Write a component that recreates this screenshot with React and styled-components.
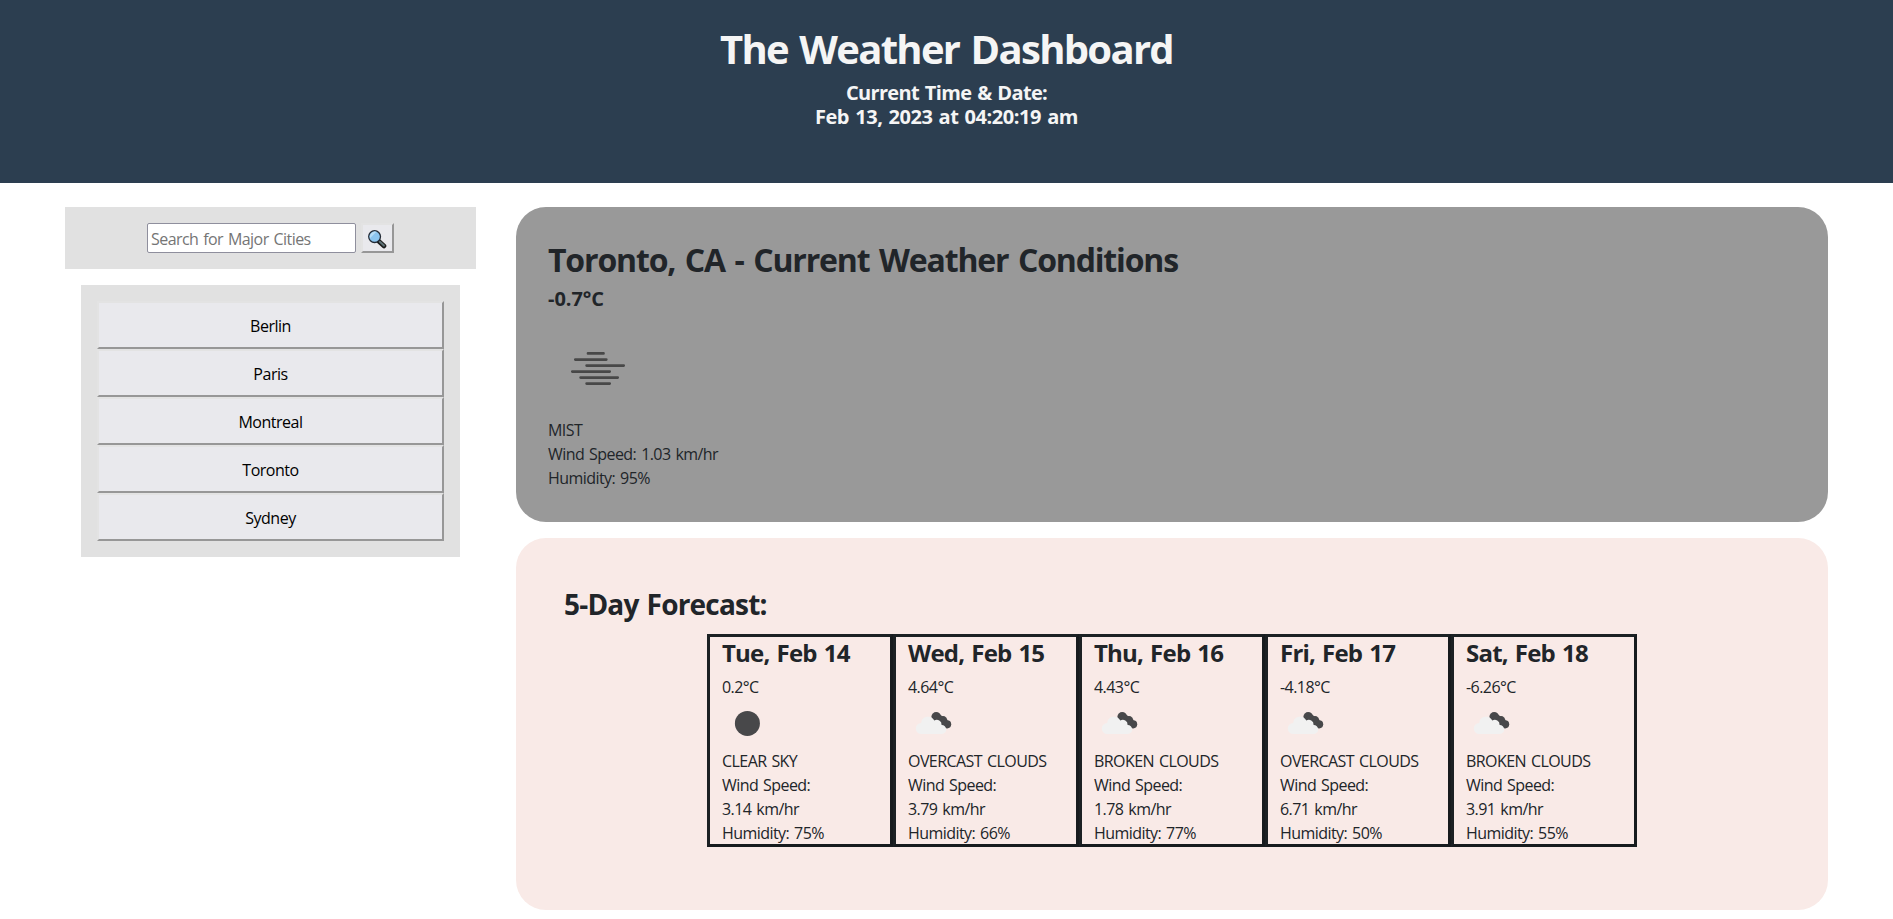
import React from "react";
import styled, { createGlobalStyle } from "styled-components";

const INK = "#212529";

const GlobalStyle = createGlobalStyle`
  *, *::before, *::after { box-sizing: border-box; }
  body {
    margin: 0;
    background: #fff;
    color: ${INK};
    font: 400 16px/24px "Segoe UI", "Open Sans", "Liberation Sans", sans-serif;
    letter-spacing: -0.56px;
    word-spacing: 1.3px;
  }
`;

const Header = styled.header`
  height: 183px;
  padding-top: 25px;
  background: #2c3e50;
  color: #f5f5f5;
  text-align: center;
`;

const Title = styled.h1`
  margin: 0 0 8px;
  font-size: 40px;
  font-weight: 700;
  line-height: 48px;
  letter-spacing: -1.7px;
  word-spacing: 2.6px;
`;

const Clock = styled.div`
  font-size: 20px;
  font-weight: 700;
`;

const ClockLine = styled.div`
  letter-spacing: ${(p) => p.$spacing};
`;

const Page = styled.div`
  display: flex;
  align-items: flex-start;
  gap: 40px;
  padding: 24px 65px 9px;
`;

const Sidebar = styled.aside`
  width: 411px;
  flex: none;
`;

const SearchBar = styled.form`
  display: flex;
  justify-content: center;
  gap: 5px;
  height: 62px;
  padding: 16px;
  background: #e1e1e1;
`;

const SearchInput = styled.input`
  width: 209px;
  height: 30px;
  padding: 3px 3px 1px;
  border: 1px solid #8f8f9d;
  border-radius: 2px;
  background: #fff;
  font: inherit;
  letter-spacing: inherit;
  word-spacing: inherit;
  &::placeholder {
    color: #757575;
    opacity: 1;
  }
`;

const RaisedButton = styled.button`
  border: 2px solid;
  border-color: #e3e3e3 #979797 #979797 #e3e3e3;
  background: #e9e9ed;
  color: #000;
  font: inherit;
  letter-spacing: -0.48px;
`;

const SearchButton = styled(RaisedButton)`
  display: flex;
  align-items: center;
  justify-content: center;
  width: 33px;
  height: 30px;
  padding: 1px 1px 0 0;
`;

const CityList = styled.div`
  display: flex;
  flex-direction: column;
  margin: 16px 16px 0;
  padding: 16px;
  background: #e1e1e1;
`;

const CityButton = styled(RaisedButton)`
  height: 48px;
  padding: 2px 0 0;
`;

const Main = styled.main`
  width: 1312px;
  display: flex;
  flex-direction: column;
  gap: 16px;
`;

const Current = styled.section`
  height: 315px;
  padding: 34px 32px 0;
  border-radius: 30px;
  background: #999;
`;

const CurrentTitle = styled.h2`
  margin: 0 0 8px;
  font-size: 32px;
  font-weight: 700;
  line-height: 38px;
  letter-spacing: -1.16px;
  word-spacing: 2.4px;
`;

const CurrentTemp = styled.div`
  margin-bottom: 7px;
  font-size: 20px;
  font-weight: 700;
  letter-spacing: -0.05px;
`;

const Icon = styled.svg`
  display: block;
  width: ${(p) => p.$size}px;
  height: ${(p) => p.$size}px;
  margin: ${(p) => p.$margin || 0};
`;

const Forecast = styled.section`
  height: 372px;
  padding: 49px 48px 0;
  border-radius: 30px;
  background: #f9eae7;
`;

const ForecastTitle = styled.h3`
  margin: 0 0 13px;
  font-size: 28px;
  font-weight: 700;
  line-height: 34px;
  letter-spacing: -0.8px;
  word-spacing: 1.5px;
`;

const Days = styled.div`
  display: flex;
  justify-content: center;
`;

const Day = styled.article`
  width: 186px;
  height: 213px;
  padding: 1px 12px 0;
  border: 3px solid;
  border-color: #1c2124 #171b1e #171b1e #1c2124;
`;

const DayName = styled.h4`
  margin: 0 0 8px;
  font-size: 24px;
  font-weight: 700;
  line-height: 29px;
  letter-spacing: -0.78px;
  word-spacing: 1.5px;
  white-space: nowrap;
`;

const Line = styled.div`
  white-space: nowrap;
`;

const CITIES = ["Berlin", "Paris", "Montreal", "Toronto", "Sydney"];

const DAYS = [
  { name: "Tue, Feb 14", temp: "0.2°C", icon: "moon", sky: "CLEAR SKY", wind: "3.14", humidity: 75 },
  { name: "Wed, Feb 15", temp: "4.64°C", icon: "clouds", sky: "OVERCAST CLOUDS", wind: "3.79", humidity: 66 },
  { name: "Thu, Feb 16", temp: "4.43°C", icon: "clouds", sky: "BROKEN CLOUDS", wind: "1.78", humidity: 77 },
  { name: "Fri, Feb 17", temp: "-4.18°C", icon: "clouds", sky: "OVERCAST CLOUDS", wind: "6.71", humidity: 50 },
  { name: "Sat, Feb 18", temp: "-6.26°C", icon: "clouds", sky: "BROKEN CLOUDS", wind: "3.91", humidity: 55 },
];

const MistIcon = () => (
  <Icon $size={100} viewBox="0 0 100 100" stroke="#484848" strokeWidth="2.7" strokeLinecap="round">
    <path d="M40 35.4H55.5M27.3 41.6H58.3M38.6 47.6H75.7M24.3 53.6H61.7M32.6 59.6H69.7M38.6 65.6H61.7" />
  </Icon>
);

const MoonIcon = () => (
  <Icon $size={50} $margin="-1px 0 1px" viewBox="0 0 50 50">
    <circle cx="25.4" cy="25.4" r="12.5" fill="#48484a" />
  </Icon>
);

const CloudsIcon = () => (
  <Icon $size={50} $margin="-1px 0 1px" viewBox="0 0 50 50">
    <g fill="#48484a">
      <circle cx="28.2" cy="18.8" r="4.8" />
      <circle cx="35" cy="22.5" r="4.4" />
      <circle cx="39.1" cy="26.3" r="4.1" />
      <path d="M24.5 21L38 30.3L41 24L31 15.5Z" />
    </g>
    <path
      fill="#f1f1f1"
      d="M13.4 36A5.5 5.5 0 0 1 13.2 25A6.9 6.9 0 0 1 26.3 22.6A4.8 4.8 0 0 1 33.6 27A4.5 4.5 0 0 1 33.8 36Z"
    />
  </Icon>
);

const MagnifierIcon = () => (
  <Icon $size={20} viewBox="0 0 20 20">
    <path d="M11.5 12L17 17" stroke="#1c1c1c" strokeWidth="4.6" strokeLinecap="round" />
    <path d="M12.8 12.8L16.9 16.6" stroke="#5f7377" strokeWidth="2" strokeLinecap="round" />
    <circle cx="7.6" cy="7.6" r="5.9" fill="#8cc5ef" stroke="#222a35" strokeWidth="1.3" />
    <path d="M3 9.2L9.4 2.8A5.2 5.2 0 0 0 3 9.2Z" fill="#b8ddf6" />
  </Icon>
);

const ICONS = { moon: MoonIcon, clouds: CloudsIcon };

function DayCard({ day }) {
  const SkyIcon = ICONS[day.icon];
  return (
    <Day>
      <DayName>{day.name}</DayName>
      <Line>{day.temp}</Line>
      <SkyIcon />
      <Line>{day.sky}</Line>
      <Line>Wind Speed:</Line>
      <Line>{day.wind} km/hr</Line>
      <Line>Humidity: {day.humidity}%</Line>
    </Day>
  );
}

export default function App() {
  return (
    <>
      <GlobalStyle />
      <Header>
        <Title>The Weather Dashboard</Title>
        <Clock>
          <ClockLine $spacing="-0.66px">Current Time &amp; Date:</ClockLine>
          <ClockLine $spacing="-0.43px">Feb 13, 2023 at 04:20:19 am</ClockLine>
        </Clock>
      </Header>
      <Page>
        <Sidebar>
          <SearchBar>
            <SearchInput placeholder="Search for Major Cities" />
            <SearchButton type="button" aria-label="Search">
              <MagnifierIcon />
            </SearchButton>
          </SearchBar>
          <CityList>
            {CITIES.map((city) => (
              <CityButton key={city}>{city}</CityButton>
            ))}
          </CityList>
        </Sidebar>
        <Main>
          <Current>
            <CurrentTitle>Toronto, CA - Current Weather Conditions</CurrentTitle>
            <CurrentTemp>-0.7°C</CurrentTemp>
            <MistIcon />
            <Line>MIST</Line>
            <Line>Wind Speed: 1.03 km/hr</Line>
            <Line>Humidity: 95%</Line>
          </Current>
          <Forecast>
            <ForecastTitle>5-Day Forecast:</ForecastTitle>
            <Days>
              {DAYS.map((day) => (
                <DayCard key={day.name} day={day} />
              ))}
            </Days>
          </Forecast>
        </Main>
      </Page>
    </>
  );
}
